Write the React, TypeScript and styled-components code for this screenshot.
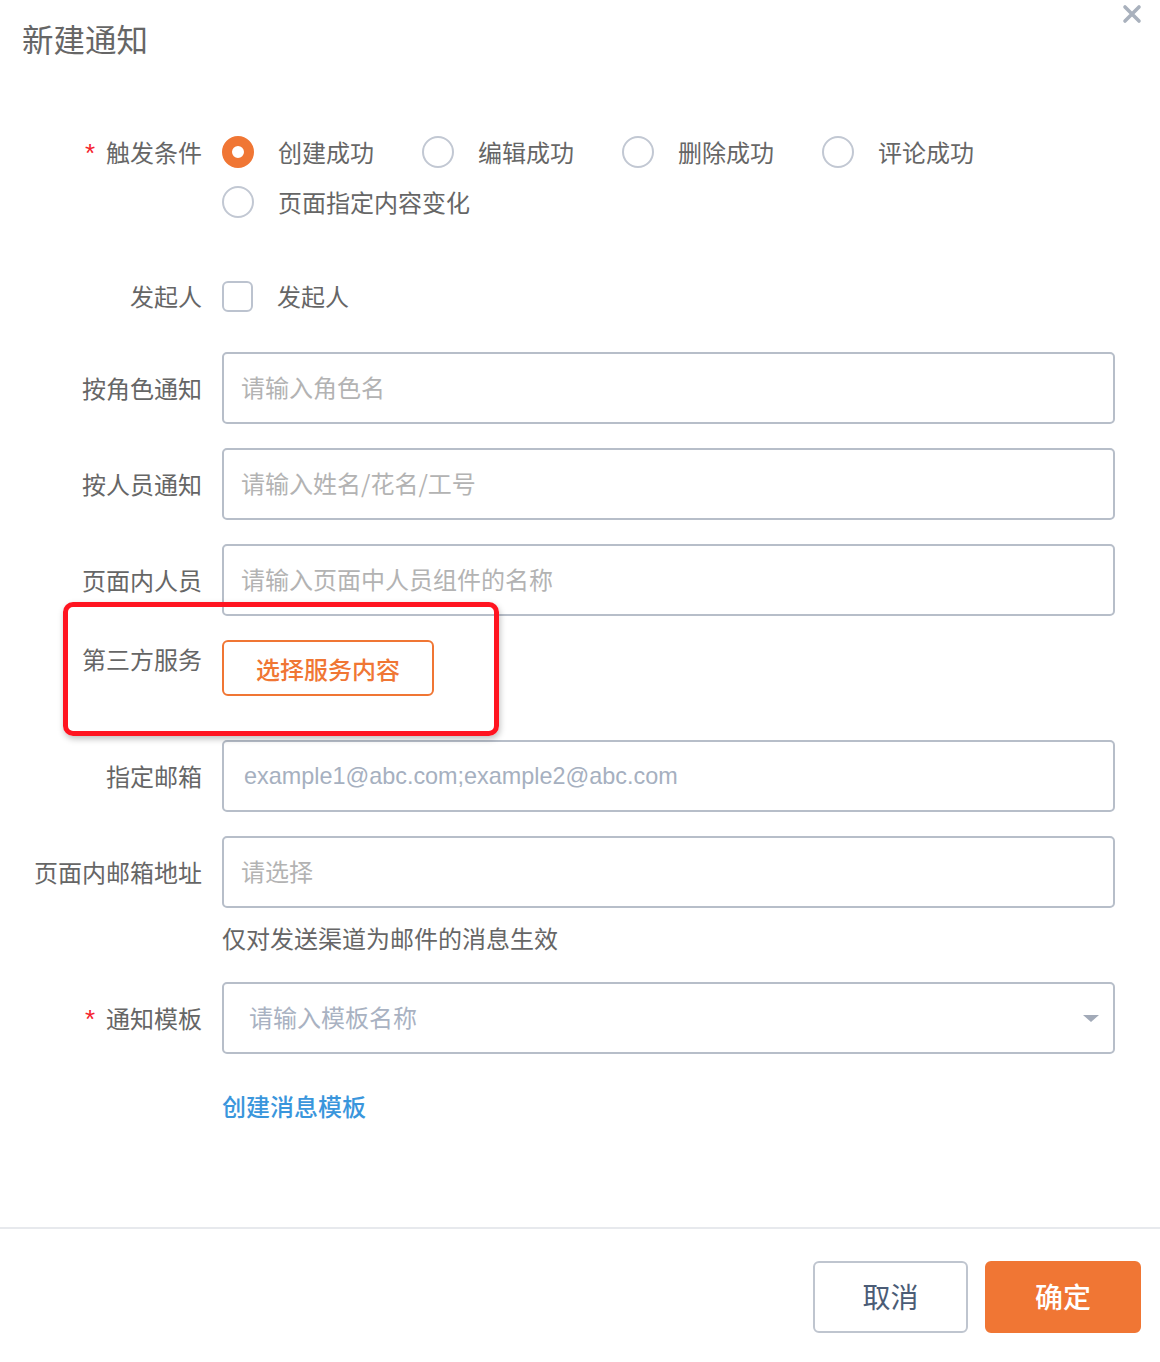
import React, {useState} from "react";
import styled, {createGlobalStyle} from "styled-components";

const GlobalStyle = createGlobalStyle`
    html, body {
        margin: 0;
        padding: 0;
        background: #FFFFFF;
    }

    body {
        font-family: "Noto Sans CJK SC", "Noto Sans", sans-serif;
    }
`;

const Modal = styled.div`
    position: relative;
    width: 1160px;
    height: 1362px;
    display: flex;
    flex-direction: column;
    background: #FFFFFF;
`;

const Header = styled.div`
    padding: 18px 22px 0;
    height: 40px;
`;

const Title = styled.h2`
    margin: 0;
    font-size: 31.5px;
    line-height: 40px;
    font-weight: 400;
    color: #666666;
`;

const CloseButton = styled.button`
    position: absolute;
    top: 4px;
    right: 18px;
    width: 20px;
    height: 20px;
    padding: 0;
    border: none;
    background: none;
    cursor: pointer;
`;

const Body = styled.div`
    position: relative;
    flex: 1 1 0;
    padding: 78px 45px 0 0;
`;

const Row = styled.div<{$mt?: number; $minH?: number}>`
    display: grid;
    grid-template-columns: 202px 1fr;
    column-gap: 20px;
    margin-top: ${(p) => p.$mt ?? 24}px;
    min-height: ${(p) => p.$minH ?? 0}px;
`;

const Label = styled.label<{$lh?: number}>`
    text-align: right;
    font-size: 24px;
    line-height: ${(p) => p.$lh ?? 72}px;
    color: #666666;
    white-space: nowrap;
`;

const Star = styled.span`
    color: #f5222d;
    margin-right: 11px;
    font-size: 26px;
    font-family: "Liberation Sans", sans-serif;
`;

const Options = styled.div`
    display: flex;
    flex-wrap: wrap;
    row-gap: 18px;
`;

const Option = styled.label`
    display: flex;
    align-items: center;
    gap: 24px;
    margin-right: 48px;
    font-size: 24px;
    line-height: 32px;
    color: #666666;
    cursor: pointer;
`;

const RadioDot = styled.span<{$checked: boolean}>`
    box-sizing: border-box;
    width: 32px;
    height: 32px;
    border-radius: 50%;
    border: ${(p) => p.$checked ? "10px solid #f07634" : "2px solid #c2c8d3"};
    background: #FFFFFF;
`;

const CheckBox = styled.span`
    box-sizing: border-box;
    width: 31px;
    height: 31px;
    border-radius: 6px;
    border: 2px solid #bcc3cf;
`;

const Input = styled.input<{$pl?: number; $latin?: boolean; $ph?: string}>`
    box-sizing: border-box;
    width: 100%;
    height: 72px;
    border: 2px solid #b7bec9;
    border-radius: 5px;
    padding: 0 0 ${(p) => p.$latin ? 0 : 3}px ${(p) => p.$pl ?? 17}px;
    font-size: ${(p) => p.$latin ? 23.4 : 24}px;
    font-family: ${(p) => p.$latin ? `"Liberation Sans", sans-serif` : `"Noto Sans CJK SC", sans-serif`};
    color: #333333;
    outline: none;

    &::placeholder {
        color: ${(p) => p.$ph ?? "#b3b3b3"};
    }
`;

const SelectBox = styled.div`
    position: relative;
`;

const Caret = styled.span`
    position: absolute;
    right: 16px;
    top: 33px;
    width: 0;
    height: 0;
    border-left: 8px solid transparent;
    border-right: 8px solid transparent;
    border-top: 7px solid #a2aab8;
`;

const OutlineButton = styled.button`
    box-sizing: border-box;
    height: 56px;
    width: 212px;
    border: 2px solid #f07634;
    border-radius: 6px;
    background: #FFFFFF;
    color: #f07634;
    font-size: 24px;
    font-weight: 500;
    font-family: "Noto Sans CJK SC", sans-serif;
    cursor: pointer;
`;

const Hint = styled.div`
    grid-column: 2;
    margin-top: 12px;
    font-size: 24px;
    line-height: 36px;
    color: #666666;
`;

const TextLink = styled.a`
    grid-column: 2;
    margin-top: 33px;
    font-size: 24px;
    line-height: 36px;
    color: #3a96dc;
    font-weight: 500;
    text-decoration: none;
    cursor: pointer;
`;

const Highlight = styled.div`
    position: absolute;
    left: 63px;
    top: 544px;
    width: 436px;
    height: 134px;
    box-sizing: border-box;
    border: 5px solid #ff1420;
    border-radius: 10px;
    box-shadow: 1px 3px 6px rgba(0, 0, 0, .25);
    pointer-events: none;
`;

const Footer = styled.div`
    display: flex;
    justify-content: flex-end;
    gap: 17px;
    padding: 32px 19px 29px;
    border-top: 2px solid #e7e9ed;
`;

const FooterButton = styled.button<{$primary?: boolean}>`
    box-sizing: border-box;
    width: ${(p) => p.$primary ? 156 : 155}px;
    height: 72px;
    border-radius: 6px;
    font-size: 28px;
    font-family: "Noto Sans CJK SC", sans-serif;
    font-weight: ${(p) => p.$primary ? 500 : 400};
    border: 2px solid ${(p) => p.$primary ? "#f07634" : "#bfc5cf"};
    background: ${(p) => p.$primary ? "#f07634" : "#FFFFFF"};
    color: ${(p) => p.$primary ? "#FFFFFF" : "#4b5c76"};
    padding-bottom: 3px;
    cursor: pointer;
`;

const triggers = ["创建成功", "编辑成功", "删除成功", "评论成功", "页面指定内容变化"];

export default function App() {
    const [trigger, setTrigger] = useState<string>("创建成功");

    return (
        <>
            <GlobalStyle />
            <Modal>
                <Header>
                    <Title>新建通知</Title>
                </Header>
                <CloseButton aria-label="close">
                    <svg width="20" height="20" viewBox="0 0 20 20">
                        <path d="M3 3 L17 17 M17 3 L3 17" stroke="#a9b1bd" strokeWidth="3.6" strokeLinecap="round" />
                    </svg>
                </CloseButton>
                <Body>
                    <Row $mt={0}>
                        <Label $lh={32}><Star>*</Star>触发条件</Label>
                        <Options>
                            {
                                triggers.map((t) => (
                                    <Option key={t} onClick={() => setTrigger(t)}>
                                        <RadioDot $checked={trigger === t} />
                                        {t}
                                    </Option>
                                ))
                            }
                        </Options>
                    </Row>
                    <Row $mt={62}>
                        <Label $lh={32}>发起人</Label>
                        <Options>
                            <Option><CheckBox />发起人</Option>
                        </Options>
                    </Row>
                    <Row $mt={40}>
                        <Label>按角色通知</Label>
                        <Input placeholder="请输入角色名" />
                    </Row>
                    <Row>
                        <Label>按人员通知</Label>
                        <Input placeholder="请输入姓名/花名/工号" />
                    </Row>
                    <Row>
                        <Label>页面内人员</Label>
                        <Input placeholder="请输入页面中人员组件的名称" />
                    </Row>
                    <Row $mt={24} $minH={76}>
                        <Label $lh={38}>第三方服务</Label>
                        <div><OutlineButton>选择服务内容</OutlineButton></div>
                    </Row>
                    <Row>
                        <Label>指定邮箱</Label>
                        <Input $latin $pl={20} $ph="#a6b0c0" placeholder="example1@abc.com;example2@abc.com" />
                    </Row>
                    <Row $mt={24}>
                        <Label>页面内邮箱地址</Label>
                        <Input placeholder="请选择" />
                        <Hint>仅对发送渠道为邮件的消息生效</Hint>
                    </Row>
                    <Row $mt={26}>
                        <Label><Star>*</Star>通知模板</Label>
                        <SelectBox>
                            <Input $pl={25} $ph="#a9b2c2" placeholder="请输入模板名称" readOnly />
                            <Caret />
                        </SelectBox>
                        <TextLink>创建消息模板</TextLink>
                    </Row>
                    <Highlight />
                </Body>
                <Footer>
                    <FooterButton>取消</FooterButton>
                    <FooterButton $primary>确定</FooterButton>
                </Footer>
            </Modal>
        </>
    );
}
